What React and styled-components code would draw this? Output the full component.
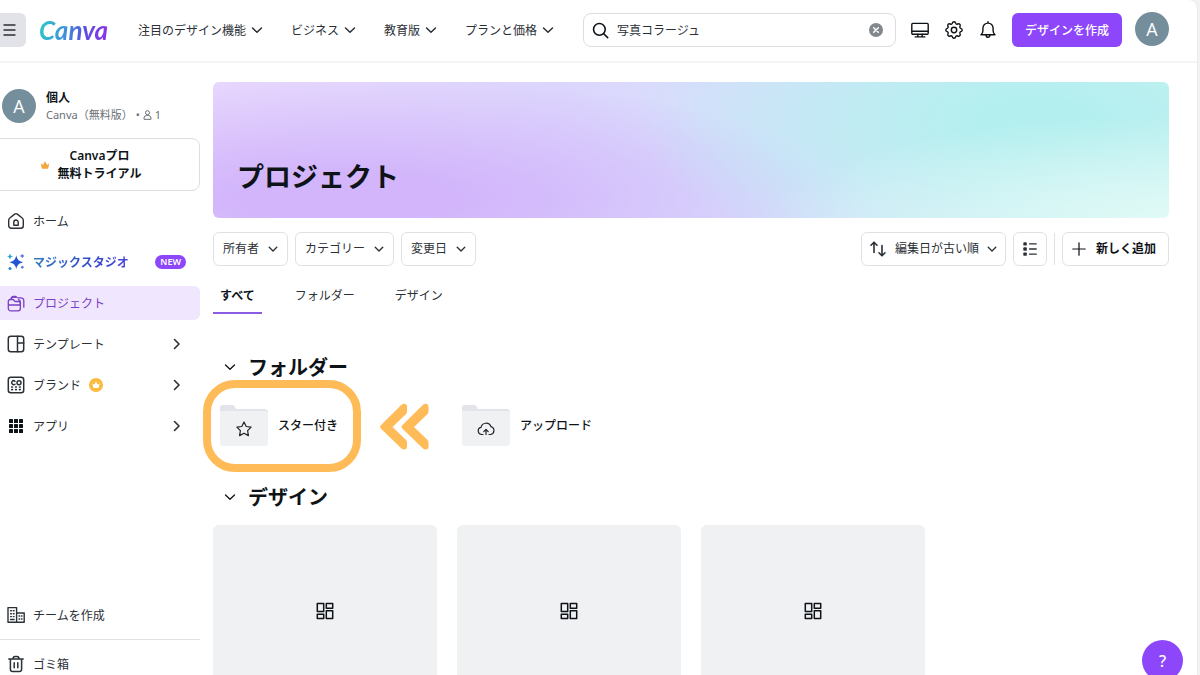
import React from "react";
import styled, { createGlobalStyle, css } from "styled-components";

const latinFirst = `"Noto Sans", "Noto Sans CJK JP", sans-serif`;

const Global = createGlobalStyle`
  *, *::before, *::after { box-sizing: border-box; }
  html, body { margin: 0; padding: 0; }
  body {
    background: #f2f3f5;
    color: #0e1318;
    font-family: "Noto Sans CJK JP", "Noto Sans", sans-serif;
    font-size: 12px;
    line-height: 20px;
    overflow: hidden;
  }
  button, input { font: inherit; color: inherit; }
  button { cursor: pointer; white-space: nowrap; }
  h1, h2, p, ul { margin: 0; padding: 0; }
  ul { list-style: none; }
  a { color: inherit; text-decoration: none; }
`;

const Page = styled.div`
  height: 100vh;
  margin-right: 3px;
  background: #fff;
  border-top-right-radius: 8px;
  box-shadow: 0 0 2px #d8dade;
  display: flex;
  flex-direction: column;
  overflow: hidden;
`;

const Header = styled.header`
  flex: none;
  height: 63px;
  display: flex;
  align-items: center;
  padding: 0 28px 1px 0;
  border-bottom: 2px solid #f4f5f6;
`;

const MenuButton = styled.button`
  width: 26px;
  height: 34px;
  padding: 0 6px 0 0;
  border: 0;
  border-radius: 0 6px 6px 0;
  background: #e2e3e9;
  display: grid;
  place-items: center;
`;

const Logo = styled.a`
  width: 73px;
  margin-left: 13px;
  font: italic 700 26px/32px Lato, sans-serif;
  background: linear-gradient(100deg, #2fc3c9 5%, #3f8fdc 38%, #5a4fe0 62%, #8a35e8 90%);
  background-clip: text;
  color: transparent;
`;

const TopNav = styled.nav`
  display: flex;
  gap: 28px;
  margin-left: 26px;
`;

const TopNavButton = styled.button`
  display: flex;
  align-items: center;
  gap: 5px;
  padding: 0;
  border: 0;
  background: none;
  color: #2b3036;
`;

const Search = styled.label`
  flex: 1;
  min-width: 120px;
  height: 34px;
  margin-left: 29px;
  padding: 0 12px 0 8px;
  display: flex;
  align-items: center;
  gap: 8px;
  border: 1px solid #dcdee1;
  border-radius: 8px;
`;

const SearchInput = styled.input`
  flex: 1;
  min-width: 0;
  padding: 0;
  border: 0;
  outline: 0;
  background: none;
  color: #2b3036;
`;

const IconButton = styled.button`
  padding: 0;
  border: 0;
  background: none;
  display: grid;
  place-items: center;
`;

const HeaderActions = styled.div`
  display: flex;
  gap: 16px;
  margin: 0 15px;
`;

const CreateButton = styled.button`
  height: 34px;
  padding: 0 13px;
  border: 0;
  border-radius: 6px;
  background: #8d46fa;
  color: #fff;
  font-weight: 500;
`;

const Avatar = styled.span`
  flex: none;
  width: 34px;
  height: 34px;
  border-radius: 50%;
  background: #748f9b;
  color: #fff;
  font: 500 18px/34px "Open Sans", sans-serif;
  text-align: center;
`;

const HeaderAvatar = styled(IconButton)`
  margin: 0 0 2px 13px;
`;

const Body = styled.div`
  flex: 1;
  min-height: 0;
  display: flex;
`;

const Sidebar = styled.aside`
  flex: none;
  width: 200px;
  display: flex;
  flex-direction: column;
  padding-top: 26px;
`;

const Account = styled.div`
  display: flex;
  align-items: center;
  gap: 10px;
  padding-left: 2px;
`;

const AccountName = styled.p`
  font-family: ${latinFirst};
  font-weight: 700;
  line-height: 18px;
`;

const AccountPlan = styled.p`
  display: flex;
  align-items: center;
  gap: 3px;
  color: #6a7077;
  font-family: ${latinFirst};
  font-size: 11px;
  line-height: 16px;
`;

const TrialButton = styled.button`
  width: 201px;
  height: 53px;
  margin: 15px 0 13px -1px;
  padding: 0 18px 0 0;
  display: flex;
  align-items: center;
  justify-content: center;
  gap: 8px;
  border: 1px solid #dcdee1;
  border-radius: 0 8px 8px 0;
  background: #fff;
  font-family: ${latinFirst};
  font-weight: 600;
  line-height: 18px;
`;

const NavList = styled.ul`
  display: flex;
  flex-direction: column;
  gap: 7px;
`;

const NavLink = styled.a`
  height: 34px;
  padding: 0 19px 0 7px;
  display: flex;
  align-items: center;
  gap: 8px;
  border-radius: 0 6px 6px 0;
  color: #2b3036;
  ${(p) => p.$active && css`
    background: #f0e6fd;
    color: #7a3fc4;
  `}
  ${(p) => p.$magic && css`
    padding-right: 14px;
    font-weight: 600;
    color: #3357c8;
  `}
`;

const Grow = styled.span`
  flex: 1;
`;

const MagicLabel = styled.span`
  background: linear-gradient(90deg, #2e7bbd, #3348d0 60%, #4a46d8);
  background-clip: text;
  color: transparent;
`;

const NewBadge = styled.span`
  height: 14px;
  padding: 0 5px;
  border-radius: 7px;
  background: #8d46fa;
  color: #fff;
  font-family: ${latinFirst};
  font-size: 9px;
  line-height: 14px;
`;

const SidebarFooter = styled.div`
  margin: auto 0 -6px;
`;

const Divider = styled.hr`
  margin: 7px 0;
  border: 0;
  border-top: 1px solid #e0e2e4;
`;

const Main = styled.main`
  flex: 1;
  min-width: 0;
  padding: 19px 28px 0 13px;
  overflow: hidden;
`;

const Banner = styled.div`
  height: 136px;
  padding: 72px 24px 0;
  border-radius: 6px;
  background:
    radial-gradient(ellipse 42% 75% at 100% 100%, #e0faf6 0%, rgba(224, 250, 246, 0) 100%),
    radial-gradient(ellipse 42% 110% at 86% 28%, #b4efef 15%, rgba(180, 239, 239, 0) 100%),
    radial-gradient(ellipse 55% 90% at 14% 85%, #d2b5fb 20%, rgba(210, 181, 251, 0) 100%),
    linear-gradient(100deg, #e8d8fd 0%, #dcd6fd 35%, #d6e2fb 62%, #d0f4f5 100%);
`;

const Title = styled.h1`
  font-size: 27px;
  line-height: 44px;
  font-weight: 700;
`;

const Toolbar = styled.div`
  display: flex;
  align-items: center;
  gap: 7px;
  margin-top: 14px;
`;

const OutlineButton = styled.button`
  height: 34px;
  padding: 0 9px;
  display: flex;
  align-items: center;
  gap: 9px;
  border: 1px solid #dfe1e4;
  border-radius: 6px;
  background: #fff;
  color: #2b3036;
  font-family: ${latinFirst};
`;

const SortButton = styled(OutlineButton)`
  padding: 0 8px 0 7px;
  gap: 8px;
`;

const ViewButton = styled(OutlineButton)`
  padding: 0 8px;
`;

const AddButton = styled(OutlineButton)`
  padding: 0 12px 0 8px;
  color: #0e1318;
  font-weight: 600;
`;

const ToolbarRule = styled.span`
  width: 1px;
  height: 32px;
  background: #dfe1e4;
`;

const Tabs = styled.div`
  display: flex;
  gap: 26px;
  margin-top: 14px;
`;

const Tab = styled.button`
  height: 34px;
  padding: 0 7px 2px;
  border: 0;
  border-bottom: 2px solid ${(p) => (p.$active ? "#8b5be0" : "transparent")};
  background: none;
  color: ${(p) => (p.$active ? "#0e1318" : "#2b3036")};
  font-weight: ${(p) => (p.$active ? 700 : 400)};
`;

const SectionTitle = styled.h2`
  display: flex;
  align-items: center;
  gap: 12px;
  padding-left: 11px;
  margin-top: ${(p) => p.$top}px;
  font-size: 20px;
  line-height: 30px;
  font-weight: 700;
`;

const CardGrid = styled.div`
  display: grid;
  grid-template-columns: repeat(auto-fill, 224px);
  gap: 20px;
`;

const FolderGrid = styled(CardGrid)`
  margin-top: 12px;
  column-gap: 18px;
`;

const Folder = styled.a`
  position: relative;
  height: 64px;
  display: flex;
  align-items: center;
  gap: 10px;
  padding: 0 7px;
  font-family: ${latinFirst};
  font-weight: 500;
`;

const Highlight = styled.span`
  position: absolute;
  top: -14px;
  left: -10px;
  width: 158px;
  height: 92px;
  border: 8px solid #ffbb57;
  border-radius: 32px;
  pointer-events: none;
`;

const Chevrons = styled.svg`
  position: absolute;
  top: 9px;
  left: 167px;
  pointer-events: none;
`;

const DesignGrid = styled(CardGrid)`
  margin-top: 13px;
`;

const DesignCard = styled.a`
  height: 172px;
  display: grid;
  place-items: center;
  border-radius: 6px;
  background: #f0f1f3;
`;

const HelpButton = styled.button`
  position: fixed;
  right: 17px;
  bottom: -6px;
  width: 41px;
  height: 41px;
  padding: 0;
  border: 0;
  border-radius: 50%;
  background: #8d46fa;
  color: #fff;
  font-family: ${latinFirst};
  font-size: 16px;
  font-weight: 500;
`;

const Icon = ({ size = 18, width = 1.4, children, ...rest }) => (
  <svg width={size} height={size} viewBox="0 0 18 18" fill="none" stroke="currentColor"
    strokeWidth={width} strokeLinecap="round" strokeLinejoin="round" aria-hidden="true" {...rest}>
    {children}
  </svg>
);

const Down = ({ size = 12, width = 1.5 }) => (
  <svg width={size} height={size} viewBox="0 0 12 12" fill="none" stroke="currentColor"
    strokeWidth={width} strokeLinecap="round" strokeLinejoin="round" aria-hidden="true">
    <path d="M1.5 4 6 8.3 10.5 4" />
  </svg>
);

const Right = () => (
  <svg width="9" height="12" viewBox="0 0 9 12" fill="none" stroke="currentColor"
    strokeWidth="1.6" strokeLinecap="round" strokeLinejoin="round" aria-hidden="true">
    <path d="M2.5 1.5 7 6 2.5 10.5" />
  </svg>
);

const MenuIcon = () => (
  <svg width="14" height="14" viewBox="0 0 14 14" stroke="#2b3036" strokeWidth="1.4" strokeLinecap="round" aria-hidden="true">
    <path d="M1 2h11M1 7h11M1 12h11" />
  </svg>
);

const SearchIcon = () => (
  <Icon size={17} width={1.7}><circle cx="7.8" cy="7.8" r="6.2" /><path d="m12.4 12.4 4.2 4.2" /></Icon>
);

const ClearIcon = () => (
  <svg width="14" height="14" viewBox="0 0 14 14" aria-hidden="true">
    <circle cx="7" cy="7" r="7" fill="#83888d" />
    <path d="m4.7 4.7 4.6 4.6m0-4.6L4.7 9.3" stroke="#fff" strokeWidth="1.5" strokeLinecap="round" />
  </svg>
);

const MonitorIcon = () => (
  <Icon><rect x=".8" y="2.4" width="16.4" height="10.8" rx="1" /><path d="M1 10.2h16M6.800 13.400v2.400M11.200 13.400v2.400M4.200 15.900h9.600" /></Icon>
);

const GearIcon = () => (
  <Icon>
    <circle cx="9" cy="9" r="2.700" />
    <path d="M7.300 2.200c.3-1 .8-1.400 1.700-1.400s1.400.4 1.700 1.400c.3.900 1 1.200 1.900.8 1-.5 1.600-.4 2.200.2s.7 1.200.2 2.200c-.4.900-.1 1.600.8 1.900 1 .3 1.400.8 1.400 1.700s-.4 1.400-1.400 1.700c-.9.3-1.200 1-.8 1.900.5 1 .4 1.600-.2 2.200s-1.200.7-2.200.2c-.9-.4-1.600-.1-1.900.8-.3 1-.8 1.400-1.700 1.400s-1.400-.4-1.700-1.400c-.3-.9-1-1.200-1.900-.8-1 .5-1.600.4-2.200-.2s-.7-1.200-.2-2.200c.4-.9.1-1.600-.8-1.900C1.200 10.400.8 9.900.8 9s.4-1.400 1.400-1.700c.9-.3 1.200-1 .8-1.900-.5-1-.4-1.600.2-2.200s1.200-.7 2.200-.2c.9.4 1.600.1 1.900-.8Z" />
  </Icon>
);

const BellIcon = () => (
  <Icon><path d="M9 .8v1.200M2 13.800h14c-1.200-1.100-1.900-2.400-1.900-4.100V7.200a5.100 5.100 0 0 0-10.200 0v2.500c0 1.700-.7 3-1.900 4.100ZM7.100 14.200c0 2.800 3.800 2.800 3.800 0" /></Icon>
);

const PersonIcon = () => (
  <svg width="9" height="10" viewBox="0 0 9 10" fill="none" stroke="currentColor" strokeWidth="1" aria-hidden="true">
    <circle cx="4.5" cy="2.7" r="2" />
    <path d="M1 9.3V8a2.4 2.4 0 0 1 2.4-2.4h2.200A2.4 2.4 0 0 1 8 8v1.300Z" />
  </svg>
);

const CrownIcon = () => (
  <svg width="10" height="10" viewBox="0 0 10 10" fill="#f3a63c" aria-hidden="true">
    <path d="M.8 3.200 3 5 5 .9 7 5l2.200-1.800-.8 4.200c-.1.8-.5 1.300-1.200 1.300H2.800c-.7 0-1.100-.5-1.200-1.300Z" />
  </svg>
);

const CrownBadge = () => (
  <svg width="14" height="14" viewBox="0 0 14 14" aria-label="Pro">
    <circle cx="7" cy="7" r="7" fill="#fbbb3f" />
    <path d="m3.400 5.500 1.900 1.300L7 3.300l1.700 3.500 1.900-1.300-.7 3.600c-.1.700-.4 1-1 1H5.100c-.6 0-.9-.3-1-1Z" fill="#fff" />
  </svg>
);

const HomeIcon = () => (
  <Icon>
    <path d="M1.700 8.200c0-.9.4-1.700 1.100-2.200L7.700 2.100c.8-.6 1.800-.6 2.600 0L15.200 6c.7.5 1.100 1.300 1.100 2.200v5.600c0 1.400-1.100 2.500-2.500 2.500H4.200a2.500 2.500 0 0 1-2.500-2.500Z" />
    <path d="M6.800 13.300v-3.100a2.200 2.200 0 0 1 4.400 0v3.100Z" />
  </Icon>
);

const SparkIcon = () => (
  <svg width="18" height="18" viewBox="0 0 18 18" aria-hidden="true">
    <path d="M9.300 2.300c.9 4.300 2.400 6 6.900 7-4.500 1-6 2.700-6.900 7-.9-4.300-2.400-6-6.900-7 4.500-1 6-2.700 6.900-7Z" fill="#2453d8" />
    <path d="M3 1.200c.3 1.400.8 2 2.300 2.300C3.800 3.800 3.300 4.400 3 5.800 2.700 4.400 2.200 3.800.7 3.500 2.200 3.200 2.700 2.600 3 1.200Z" fill="#1d9ad0" stroke="#1d9ad0" strokeWidth=".5" />
    <path d="M15.200 1.200c.2 1.100.6 1.600 1.800 1.800-1.200.2-1.600.7-1.800 1.800-.2-1.100-.6-1.600-1.800-1.800 1.200-.2 1.600-.7 1.800-1.800ZM15.300 12.800c.2.900.5 1.200 1.400 1.400-.9.200-1.200.5-1.400 1.400-.2-.9-.5-1.200-1.400-1.400.9-.2 1.200-.5 1.400-1.400Z" fill="#3559dd" stroke="#3559dd" strokeWidth=".5" />
    <circle cx="3" cy="15.400" r="1.500" fill="#2a7fd6" />
  </svg>
);

const ProjectsIcon = () => (
  <Icon width={1.300}>
    <path d="M1.300 7.600c0-1.300.8-2.100 2.100-2.100h2.200c.6 0 1 .2 1.400.7l.4.600c.3.500.7.700 1.300.700h2.600c1.300 0 2.100.8 2.100 2.100v4.600c0 1.600-1 2.600-2.600 2.600H3.900c-1.600 0-2.600-1-2.600-2.600ZM1.300 11h12.100" />
    <path d="M4.100 5.300c0-1.800.9-3 2.600-3h1.400c.6 0 1 .2 1.400.7.400.6.8.8 1.400.8h2.900c1.900 0 3 1.100 3 3v6.400" />
    <path d="M4.300 4.300c1.300-1.400 2.800-1.500 4.200-.9M13.400 10.500V8.300c0-1.400-.7-2.300-2-2.600" />
  </Icon>
);

const TemplateIcon = () => (
  <Icon width={1.500}><rect x="1.300" y="1.300" width="15.400" height="15.400" rx="2.500" /><path d="M10.500 1.300v15.400M10.500 8h6.200" /></Icon>
);

const BrandIcon = () => (
  <Icon width={1.500}>
    <rect x="1.300" y="1.300" width="15.400" height="15.400" rx="2.500" />
    <path d="M8 5.200a2 2 0 1 0 0 3" />
    <circle cx="12" cy="6.700" r="2" />
    <path d="M4.700 11h.8M8.600 11h.8M12.500 11h.8M4.700 13.600h.8M8.600 13.600h.8M12.500 13.600h.8" strokeWidth="1.600" />
  </Icon>
);

const AppsIcon = () => (
  <svg width="18" height="18" viewBox="0 0 18 18" fill="#0e1318" aria-hidden="true">
    {[2, 7, 12].map((y) => [2, 7, 12].map((x) => (
      <rect key={x + "-" + y} x={x} y={y} width="4" height="4" rx="0.6" />
    )))}
  </svg>
);

const TeamIcon = () => (
  <Icon width={1.400}>
    <path d="M1 1.600h8.600v14.600H1ZM9.600 7h7.600v9.200H9.600M3.600 4.800h.8M6.300 4.800h.8M3.600 7.700h.8M6.300 7.700h.8M3.600 10.600h.8M6.300 10.600h.8M3.600 13.500h3.500M12 10h.6M14.400 10h.6M12 13h.6M14.400 13h.6" />
  </Icon>
);

const TrashIcon = () => (
  <Icon width={1.500}><path d="M1.800 4h14.400M6 3.800c0-1.600.8-2.300 2-2.300h2c1.200 0 2 .7 2 2.300M3.400 4.200v10c0 1.400.9 2.300 2.300 2.300h6.600c1.400 0 2.300-.9 2.300-2.300v-10M7.200 7.800v5M10.800 7.800v5" /></Icon>
);

const SortIcon = () => (
  <Icon width={1.600}><path d="M5 12.500v-10M2 5.200l3-3 3 3M13 5.500v10M10 12.800l3 3 3-3" /></Icon>
);

const ListIcon = () => (
  <Icon size={16} width={1.500}>
    <path d="M8.500 3.200H16M8.500 9H16M8.500 14.800H16" />
    <g fill="currentColor" stroke="none">
      <rect x="1.500" y="1.300" width="3.900" height="3.900" rx="1" />
      <rect x="1.500" y="7.100" width="3.900" height="3.900" rx="1" />
      <rect x="1.500" y="12.800" width="3.900" height="3.900" rx="1" />
    </g>
  </Icon>
);

const PlusIcon = () => (
  <Icon size={16}><path d="M9 2v14M2 9h14" /></Icon>
);

const StarPath = () => (
  <path d="m24 17 2.200 4.500 4.900.7-3.500 3.500.8 4.900-4.400-2.300-4.400 2.300.8-4.900-3.500-3.500 4.900-.7Z" />
);

const CloudPath = () => (
  <path d="M21 29.500h-1.300a3.600 3.600 0 0 1-.7-7.100 5.200 5.200 0 0 1 10-.7 4 4 0 0 1-.4 7.800H27M24 29.500v-4.500M21.800 26.700 24 24.500l2.200 2.200" />
);

const FolderIcon = ({ children }) => (
  <svg width="48" height="42" viewBox="0 0 48 42" aria-hidden="true">
    <path d="M0 3c0-1.700 1-3 2.800-3h9.400c1.300 0 2 .6 2.600 1.800l1 2.200H45c1.800 0 3 1.200 3 3v4H0Z" fill="#e3e4eb" />
    <path d="M0 6h45c1.800 0 3 1 3 2.500V38c0 1.800-1.200 3-3 3H3c-1.800 0-3-1.200-3-3Z" fill="#f0f1f3" />
    <g fill="none" stroke="#20252b" strokeWidth="1.200" strokeLinecap="round" strokeLinejoin="round">{children}</g>
  </svg>
);

const DesignIcon = () => (
  <Icon width={1.500}>
    <rect x="1.300" y="1.500" width="6.400" height="8" /><rect x="10.300" y="1.500" width="6.400" height="4.700" />
    <rect x="1.300" y="12.200" width="6.400" height="4.300" /><rect x="10.300" y="8.800" width="6.400" height="7.700" />
  </Icon>
);

const navItems = [
  { label: "ホーム", icon: HomeIcon },
  { label: "マジックスタジオ", icon: SparkIcon, magic: true },
  { label: "プロジェクト", icon: ProjectsIcon, active: true },
  { label: "テンプレート", icon: TemplateIcon, more: true },
  { label: "ブランド", icon: BrandIcon, pro: true, more: true },
  { label: "アプリ", icon: AppsIcon, more: true },
];

export default function App() {
  return (
    <>
      <Global />
      <Page lang="ja">
        <Header>
          <MenuButton aria-label="メニュー"><MenuIcon /></MenuButton>
          <Logo href="#">Canva</Logo>
          <TopNav>
            {["注目のデザイン機能", "ビジネス", "教育版", "プランと価格"].map((label) => (
              <TopNavButton key={label}>{label}<Down /></TopNavButton>
            ))}
          </TopNav>
          <Search>
            <SearchIcon />
            <SearchInput type="text" aria-label="検索" defaultValue="写真コラージュ" />
            <IconButton type="button" aria-label="クリア"><ClearIcon /></IconButton>
          </Search>
          <HeaderActions>
            <IconButton aria-label="デバイス"><MonitorIcon /></IconButton>
            <IconButton aria-label="設定"><GearIcon /></IconButton>
            <IconButton aria-label="通知"><BellIcon /></IconButton>
          </HeaderActions>
          <CreateButton>デザインを作成</CreateButton>
          <HeaderAvatar aria-label="アカウント"><Avatar>A</Avatar></HeaderAvatar>
        </Header>
        <Body>
          <Sidebar>
            <Account>
              <Avatar>A</Avatar>
              <div>
                <AccountName>個人</AccountName>
                <AccountPlan><span>Canva（無料版）</span><span>•</span><PersonIcon /><span>1</span></AccountPlan>
              </div>
            </Account>
            <TrialButton>
              <CrownIcon />
              <span>Canvaプロ<br />無料トライアル</span>
            </TrialButton>
            <nav>
              <NavList>
                {navItems.map(({ label, icon: ItemIcon, active, magic, pro, more }) => (
                  <li key={label}>
                    <NavLink href="#" $active={active} $magic={magic}>
                      <ItemIcon />
                      {magic ? <MagicLabel>{label}</MagicLabel> : <span>{label}</span>}
                      {pro && <CrownBadge />}
                      <Grow />
                      {magic && <NewBadge>NEW</NewBadge>}
                      {more && <Right />}
                    </NavLink>
                  </li>
                ))}
              </NavList>
            </nav>
            <SidebarFooter>
              <NavLink href="#"><TeamIcon /><span>チームを作成</span></NavLink>
              <Divider />
              <NavLink href="#"><TrashIcon /><span>ゴミ箱</span></NavLink>
            </SidebarFooter>
          </Sidebar>
          <Main>
            <Banner><Title>プロジェクト</Title></Banner>
            <Toolbar>
              {["所有者", "カテゴリー", "変更日"].map((label) => (
                <OutlineButton key={label}>{label}<Down size={10} width={1.700} /></OutlineButton>
              ))}
              <Grow />
              <SortButton><SortIcon />編集日が古い順<Down size={10} width={1.700} /></SortButton>
              <ViewButton aria-label="リスト表示"><ListIcon /></ViewButton>
              <ToolbarRule />
              <AddButton><PlusIcon />新しく追加</AddButton>
            </Toolbar>
            <Tabs role="tablist">
              <Tab role="tab" aria-selected="true" $active>すべて</Tab>
              <Tab role="tab" aria-selected="false">フォルダー</Tab>
              <Tab role="tab" aria-selected="false">デザイン</Tab>
            </Tabs>
            <SectionTitle $top={38}><Down width={1.300} />フォルダー</SectionTitle>
            <FolderGrid>
              <Folder href="#">
                <FolderIcon><StarPath /></FolderIcon>
                スター付き
                <Highlight />
                <Chevrons width="50" height="48" viewBox="0 0 50 48" fill="#ffbb57" aria-hidden="true">
                  <path d="M.8 22.200 21.500 1.700C23.500-.2 27 .7 27 3.500v5c0 1-.4 1.900-1.200 2.700L12.500 24l13.300 12.800c.8.800 1.200 1.700 1.200 2.700v4.300c0 2.800-3.500 3.700-5.500 1.800L.8 25.400c-1-1-1-2.200 0-3.200Z" />
                  <path d="M22.300 22.200 43 1.700c2-1.900 5.500-1 5.500 1.800v5c0 1-.4 1.900-1.200 2.700L34 24l13.300 12.800c.8.800 1.200 1.700 1.200 2.700v4.300c0 2.800-3.500 3.700-5.500 1.800L22.300 25.400c-1-1-1-2.200 0-3.200Z" />
                </Chevrons>
              </Folder>
              <Folder href="#">
                <FolderIcon><CloudPath /></FolderIcon>
                アップロード
              </Folder>
            </FolderGrid>
            <SectionTitle $top={24}><Down width={1.300} />デザイン</SectionTitle>
            <DesignGrid>
              {[1, 2, 3].map((n) => (
                <DesignCard key={n} href="#" aria-label={"デザイン " + n}><DesignIcon /></DesignCard>
              ))}
            </DesignGrid>
          </Main>
        </Body>
        <HelpButton aria-label="ヘルプ">?</HelpButton>
      </Page>
    </>
  );
}
